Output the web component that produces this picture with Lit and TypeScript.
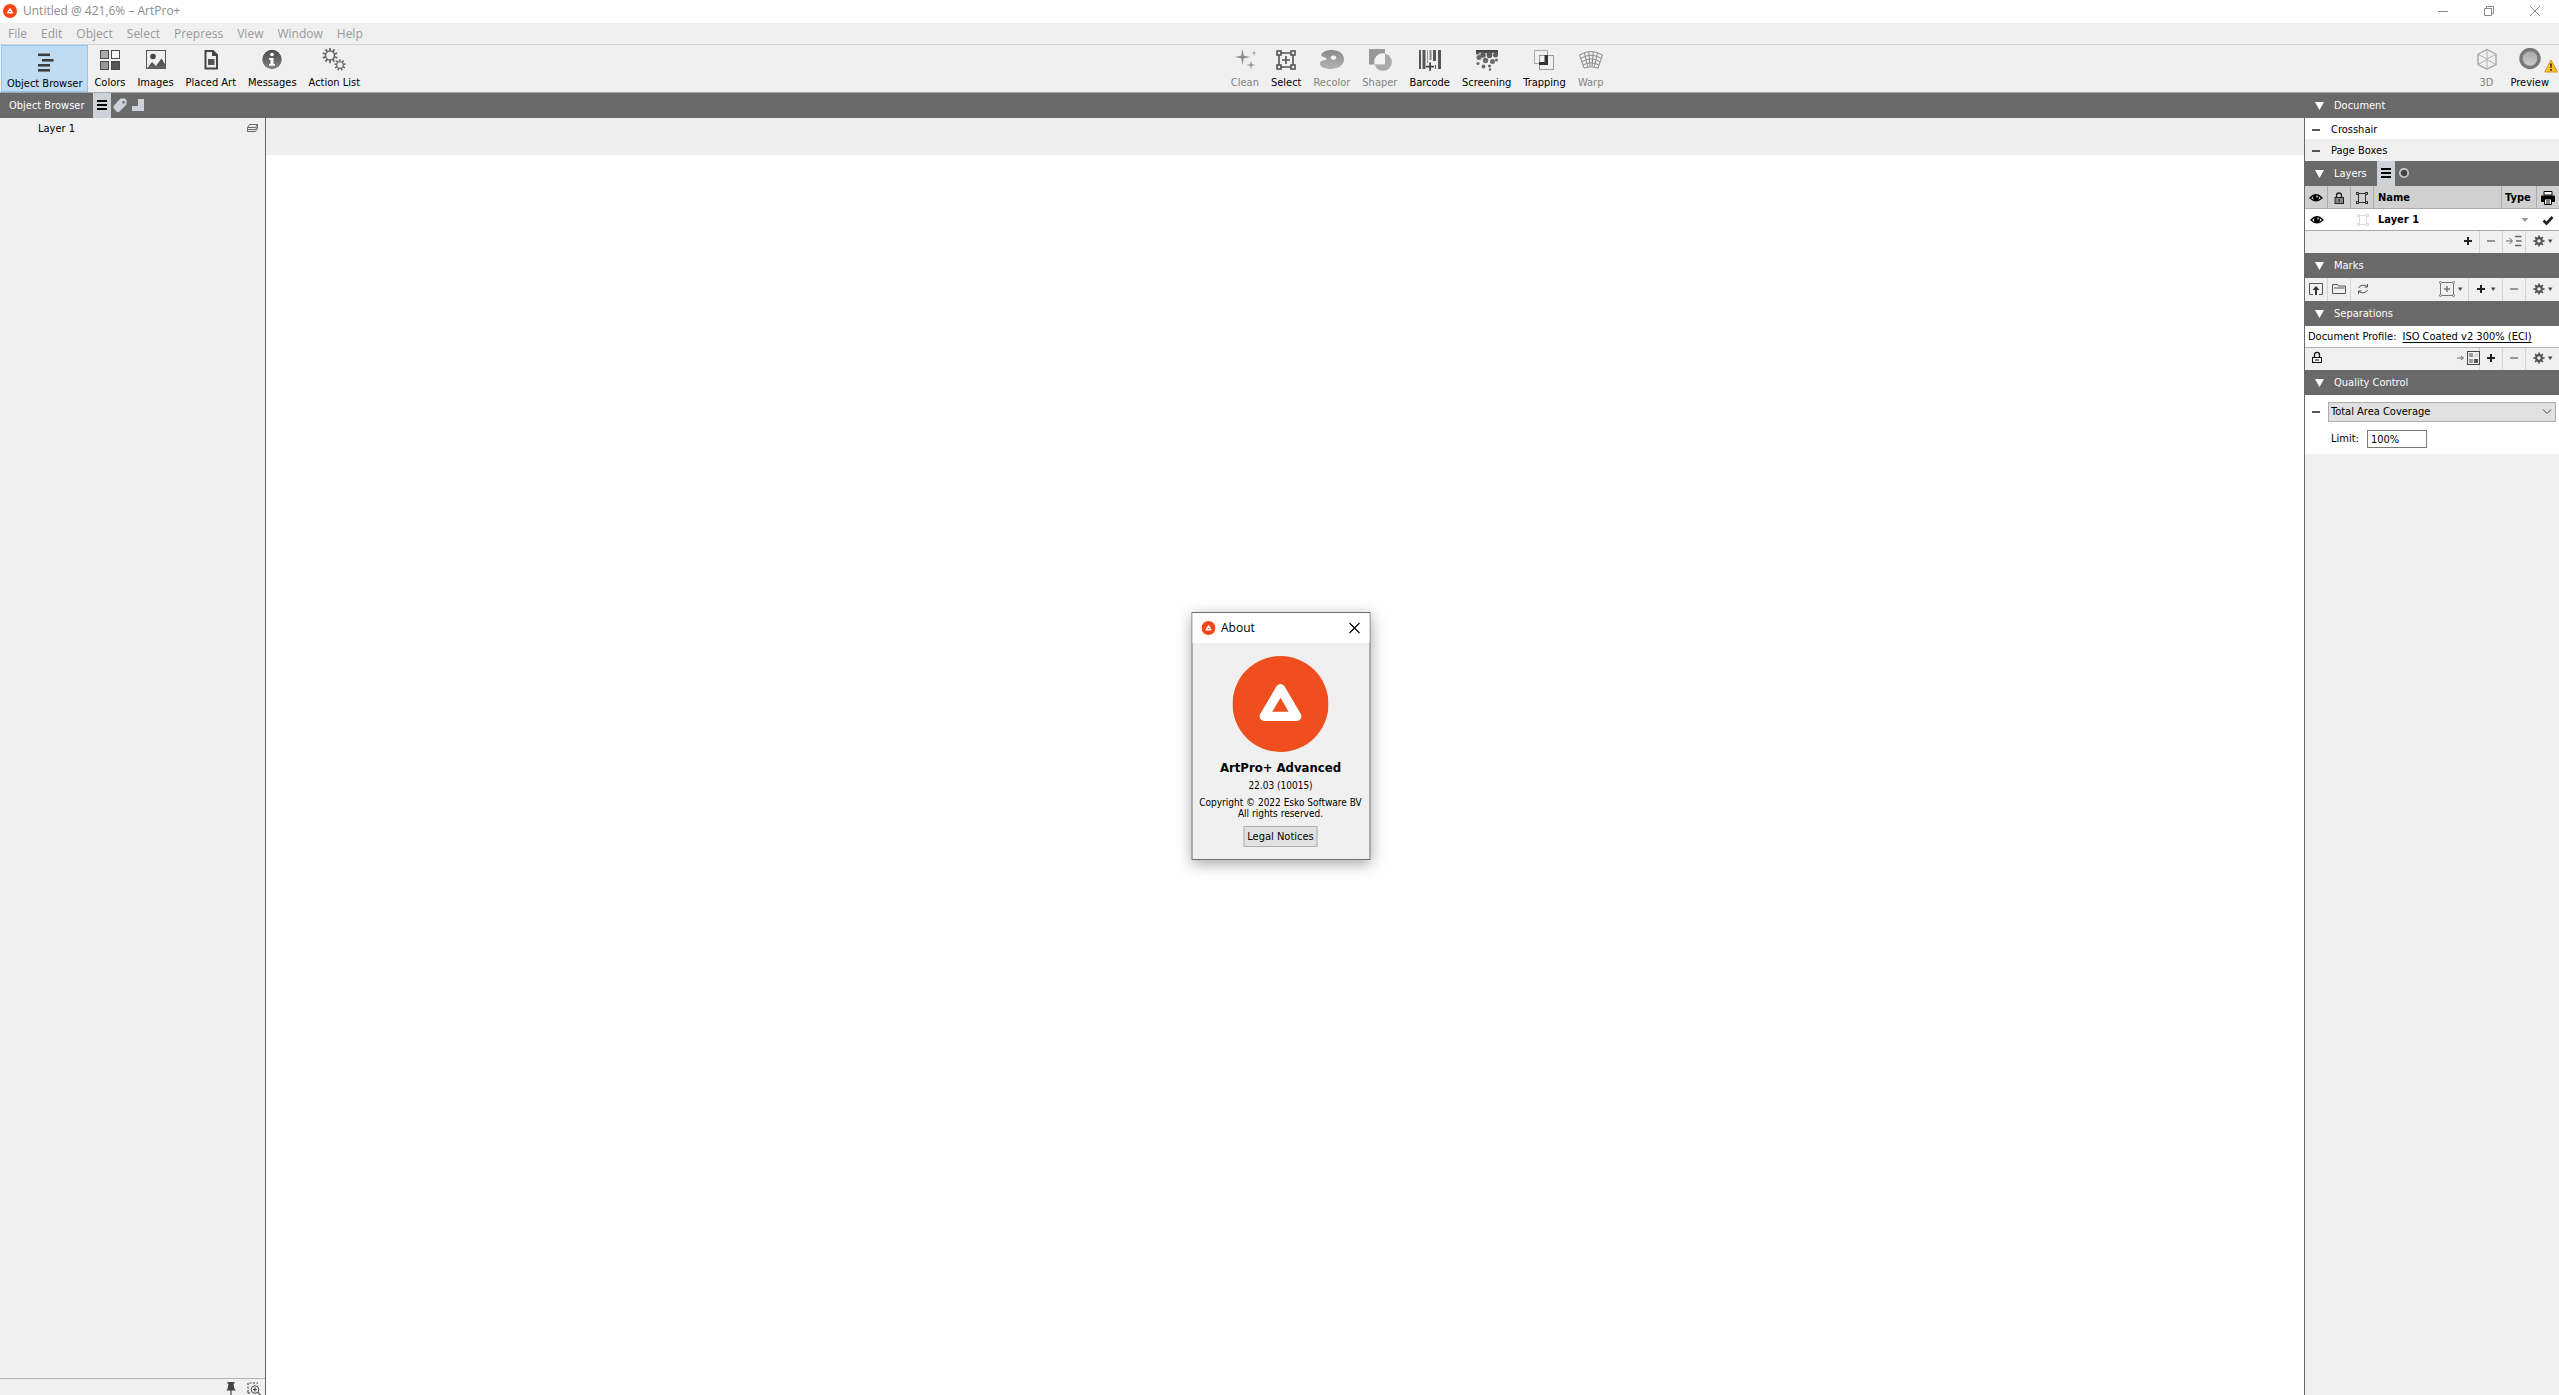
import { LitElement, html, svg, css, nothing, type TemplateResult, type SVGTemplateResult } from "lit";
import { customElement, property } from "lit/decorators.js";
import { classMap } from "lit/directives/class-map.js";

type Icon = SVGTemplateResult;

const icon = (w: number, h: number, body: Icon): TemplateResult =>
  html`<svg width=${w} height=${h} viewBox="0 0 ${w} ${h}" aria-hidden="true">${body}</svg>`;

/** Outline of a cog wheel with square teeth and a round hub hole. */
function cog(cx: number, cy: number, outer: number, inner: number, hole: number, teeth: number): string {
  const pts: string[] = [];
  const step = (Math.PI * 2) / teeth;
  for (let i = 0; i < teeth; i++) {
    const a = i * step;
    const at = (r: number, t: number) =>
      pts.push(`${(cx + r * Math.sin(t)).toFixed(2)} ${(cy - r * Math.cos(t)).toFixed(2)}`);
    at(inner, a - step * 0.28);
    at(outer, a - step * 0.2);
    at(outer, a + step * 0.2);
    at(inner, a + step * 0.28);
  }
  return `M${pts.join("L")}ZM${cx - hole} ${cy}a${hole} ${hole} 0 1 0 ${hole * 2} 0a${hole} ${hole} 0 1 0 ${-hole * 2} 0Z`;
}

const shade = (id: string, top: string, bottom: string): Icon =>
  svg`<defs><linearGradient id=${id} x1="0" y1="0" x2="0" y2="1"><stop offset="0" stop-color=${top}/><stop offset="1" stop-color=${bottom}/></linearGradient></defs>`;

const logo = (size: number, fill: string) => html`<svg width=${size} height=${size} viewBox="0 0 96 96" aria-hidden="true">
  <circle cx="48" cy="48" r="48" fill=${fill}/>
  <path d="M48 32.700 31.700 60.300H64.300Z" fill="none" stroke="#fff" stroke-width="9.300" stroke-linejoin="round"/>
</svg>`;

const big = {
  browser: icon(24, 24, svg`<g fill="#3c3f42">
    <rect x="5" y="4.500" width="12" height="2.600"/><rect x="9" y="10" width="11.500" height="2.600"/>
    <rect x="5" y="15" width="12" height="2.600"/><rect x="5" y="20" width="12" height="2.600"/></g>`),
  colors: icon(24, 24, svg`<g stroke="#4a4a4a">
    <rect x="2.500" y="2.500" width="8" height="8" fill="#aaa"/><rect x="13.500" y="2.500" width="8" height="8" fill="#f4f4f4"/>
    <rect x="2.500" y="13.500" width="8" height="8" fill="#999"/><rect x="13.500" y="13.500" width="8" height="8" fill="#555"/></g>`),
  images: icon(24, 24, svg`${shade("g", "#444", "#666")}
    <rect x="2.500" y="2.500" width="19" height="18" fill="none" stroke="#555"/>
    <circle cx="9" cy="8.500" r="2.800" fill="#444"/>
    <path d="M3 20.500 8 14l4 4 5.500-7.500L21.500 17v3.500Z" fill="url(#g)"/>`),
  placed: icon(24, 24, svg`
    <path d="M6.500 3h7.500l4 4v13.500H6.500Z" fill="none" stroke="#444" stroke-width="2"/>
    <path d="M13 3v5h5Z" fill="#444"/><rect x="9" y="11" width="6.500" height="6" fill="#555"/>`),
  messages: icon(24, 24, svg`${shade("g", "#4c4c4c", "#808080")}
    <circle cx="12" cy="11.500" r="9.700" fill="url(#g)"/>
    <circle cx="12" cy="6.500" r="1.800" fill="#fff"/>
    <path d="M9 10h4.500v6H15v1.800H9V16h1.500v-4.300H9Z" fill="#fff"/>`),
  actions: icon(24, 24, svg`<g fill="#6a6a6a" fill-rule="evenodd">
    <path d=${cog(8, 7.5, 7.7, 5.2, 3.7, 10)}/>
    <path d=${cog(18, 17, 5.8, 3.9, 2.7, 9)}/></g>`),
  clean: icon(24, 24, svg`<g fill="#8c8c8c">
    <path d="M9.500 1 10.800 7.700 17.500 9 10.800 10.300 9.500 17 8.200 10.300 1.500 9 8.200 7.700Z"/>
    <path d="M18 12.500l.8 3.700 3.700.8-3.700.8-.8 3.700-.8-3.700-3.700-.8 3.700-.8Z"/>
    <path d="M21 2.500l.5 2 2 .5-2 .5-.5 2-.5-2-2-.5 2-.5Z"/></g>`),
  select: icon(24, 24, svg`<g fill="none" stroke="#555" stroke-width="1.600">
    <path d="M5 7v10M19 7v10M7 5h10M7 19h10M12 8v8M8 12h8"/>
    <rect x="3" y="3" width="4" height="4"/><rect x="17" y="3" width="4" height="4"/>
    <rect x="3" y="17" width="4" height="4"/><rect x="17" y="17" width="4" height="4"/></g>`),
  recolor: icon(26, 24, svg`${shade("g", "#8a8a8a", "#b4b4b4")}
    <path fill-rule="evenodd" fill="url(#g)" d="M13 2C20 2 25 6 25 11.500S19.500 21 12 21C5 21 1 18.500 1 15.500c0-2.500 3-2.800 5.500-3.500 1.500-.5 1-2-.5-2.500C3 8.500 1.500 8 2.500 6 4 3.500 8 2 13 2ZM14.500 7.500a2.800 2.200 0 1 0 .01 0Z"/>`),
  shaper: icon(24, 24, svg`
    <circle cx="15" cy="14" r="8.800" fill="#aaa"/><path d="M1 1h16v15.500H1Z" fill="#999"/>
    <path d="M17 5.500v11H6.500A8.800 8.800 0 0 1 17 5.500Z" fill="#f4f4f4"/>`),
  barcode: icon(24, 24, svg`<g fill="#555">
    <rect x="1" y="2" width="2" height="19"/><rect x="4.500" y="2" width="3" height="19"/>
    <rect x="9" y="2" width="1" height="13" fill="#999"/><rect x="11.500" y="2" width="2" height="10" fill="#888"/>
    <rect x="15" y="2" width="3" height="11"/><rect x="20" y="2" width="3" height="19"/>
    <rect x="17" y="17" width="1" height="4"/>
    <path d="M11.200 14.500h1.800v3.200h3.200v1.800H13v3.200h-1.800v-3.200H8v-1.800h3.200Z" fill="#444"/></g>`),
  screening: icon(24, 24, svg`${shade("g", "#3c3c3c", "#666")}<path d="M1 2H23V6.500H1Z" fill="url(#g)"/>
    <g fill="#5c5c5c"><circle cx="8" cy="7" r="2.800"/><circle cx="14.500" cy="7.500" r="2.800"/><circle cx="20.500" cy="7" r="2.500"/></g>
    <g fill="#6c6c6c"><circle cx="4" cy="9.500" r="2.500"/><circle cx="10.500" cy="12.500" r="2.700"/><circle cx="17.500" cy="13.500" r="2.500"/>
    <circle cx="3" cy="15.500" r="1.600"/><circle cx="8.500" cy="18.500" r="1.900"/>
    <circle cx="21.500" cy="12" r="1.600"/><circle cx="14.500" cy="18" r="1.600"/><circle cx="15" cy="21.500" r="1.200"/></g>
    <g fill="#ccc"><circle cx="5" cy="5.500" r="1"/><circle cx="11" cy="6" r="1"/><circle cx="18" cy="5.500" r="1"/></g>`),
  trapping: icon(24, 24, svg`
    <rect x="2.500" y="2.500" width="13" height="13" fill="none" stroke="#aaa"/>
    <rect x="7.500" y="7.500" width="14" height="14" fill="none" stroke="#999"/>
    <path d="M16 7v10H7v-3h5.500V7Z" fill="#333"/>`),
  warp: icon(26, 24, svg`<g fill="none" stroke="#8c8c8c" stroke-width="1">
    <path d="M1.500 7Q13 0 24.500 7L20 20Q13 17.500 6 20Z"/>
    <path d="M2.500 10.500Q13 4 23.500 10.500M3.800 13.800Q13 8 22.200 13.800M5 17Q13 12.500 21 17M6.500 5l3.200 13.700M10.800 3.700l1.200 14.800M15.200 3.700 14 18.500M19.500 5l-3.200 13.700"/></g>`),
  cube: icon(24, 24, svg`<g fill="none" stroke="#b0b0b0">
    <path d="M12 1.500 21 6.300V16.500L12 21 3 16.500V6.300Z" stroke="#a0a0a0" stroke-width="1.300"/>
    <path d="M3 6.300 12 11l9-4.700M12 11v10M12 1.500v10M3 16.500l9-5 9 5"/></g>`),
  preview: icon(24, 24, svg`${shade("g", "#a4a4a4", "#d0d0d0")}
    <circle cx="12" cy="10.500" r="9" fill="url(#g)" stroke="#777" stroke-width="3.400"/>`),
};

const small = {
  lines: icon(18, 18, svg`<path d="M4 5h10M4 9h10M4 13h10" stroke="#000" stroke-width="2"/>`),
  tag: icon(18, 18, svg`<path fill-rule="evenodd" fill="#cdd2da" d="M9.500 2.500h4.500L15.500 4v4.500L8 16H6L2.500 12V10ZM12.500 5a1.300 1.300 0 1 0 .01 0Z"/>`),
  corner: icon(18, 18, svg`<path d="M9 3h6v12H3V10h6Z" fill="#cdd2da"/>`),
  ring: icon(18, 18, svg`<circle cx="9" cy="9" r="4.200" fill="#444" stroke="#ccc" stroke-width="1.700"/>`),
  stack: icon(12, 12, svg`<g fill="none" stroke="#666"><path d="M3.500 1.500h8l-2 3h-8ZM1.500 4.500v2h8l2-3v-2M1.500 6.500v2h8l2-3v-2"/></g>`),
  pin: icon(12, 14, svg`<path d="M2.500 0h7v1.800H8.500L9.500 7 11 8.500H6.600V14H5.400V8.500H1L2.500 7 3.500 1.800h-1Z" fill="#444"/>`),
  zoom: icon(14, 14, svg`<path d="M1 10V1h10" fill="none" stroke="#333" stroke-dasharray="2 1.500"/><path d="M1 10v1h2" fill="none" stroke="#333"/>
    <circle cx="8" cy="7.500" r="3.800" fill="none" stroke="#444"/><path d="M10.800 10.300 14 13.500M6 7.500h4M8 5.500v4" stroke="#444" stroke-width="1.200"/>`),
  eye: icon(14, 12, svg`<path d="M1 6Q7-.5 13 6 7 11.500 1 6Z" fill="none" stroke="#000" stroke-width="1.300"/><circle cx="7" cy="5.700" r="3" fill="#000"/><circle cx="8" cy="4.600" r="1" fill="#bbb"/>`),
  lockDark: icon(12, 14, svg`<path d="M3.500 7V4.500a2.500 2.500 0 0 1 5 0V7" fill="none" stroke="#222" stroke-width="1.300"/><rect x="2" y="6.500" width="8.500" height="6" fill="#888" stroke="#222"/><path d="M6.200 8v3" stroke="#222"/>`),
  lock: icon(12, 14, svg`<path d="M3.500 6.500V3.800a2.500 2.500 0 0 1 5 0v2.700" fill="none" stroke="#111" stroke-width="1.300"/><rect x="1.500" y="6.500" width="9" height="5" fill="none" stroke="#111"/><path d="M4 9h4" stroke="#111"/>`),
  frame: (c: string) => icon(14, 14, svg`<g fill="none" stroke=${c}><path d="M3.500 4v6M10.500 4v6M4 2.500h6M4 11.500h6"/><rect x="1.500" y="1.500" width="2" height="2"/><rect x="10.500" y="1.500" width="2" height="2"/><rect x="1.500" y="10.500" width="2" height="2"/><rect x="10.500" y="10.500" width="2" height="2"/></g>`),
  printer: icon(14, 14, svg`<path d="M3 .5h8V4H3Z" fill="#fff" stroke="#000"/><rect y="4.500" width="14" height="6.500" rx="1" fill="#000"/><path d="M3.500 8h7v5.500h-7Z" fill="#fff" stroke="#000"/><path d="M5 10h4M5 12h4" stroke="#000"/>`),
  check: icon(12, 12, svg`<path d="M1.500 6.500 4.500 9.500 10.500 3" fill="none" stroke="#222" stroke-width="2.600"/>`),
  caret: icon(8, 6, svg`<path d="M.5 1h7L4 5Z" fill="#999"/>`),
  drop: icon(6, 6, svg`<path d="M1 1.500h4.500L3.200 5Z" fill="#444"/>`),
  plus: icon(10, 10, svg`<path d="M1 5h8M5 1v8" stroke="#222" stroke-width="2"/>`),
  minus: icon(10, 10, svg`<path d="M1 5h8" stroke="#777" stroke-width="1.500"/>`),
  dash: icon(8, 4, svg`<path d="M0 2h8" stroke="#222" stroke-width="1.500"/>`),
  move: icon(16, 12, svg`<path d="M0 6h6M3.500 3 6.500 6 3.500 9" fill="none" stroke="#666"/><path d="M9 1.500h6.500M10 6h5.500M9 10.500h6.500" stroke="#666" stroke-width="1.300"/>`),
  gear: icon(12, 12, svg`<path fill-rule="evenodd" fill="#555" d=${cog(6, 6, 5.6, 4, 1.8, 8)}/>`),
  upload: icon(14, 14, svg`<path d="M4 12.500H.500V1.500h13v11H10" fill="none" stroke="#555"/><path d="M7 4 10.500 8H8v5H6V8H3.500Z" fill="#333"/>`),
  folder: icon(14, 12, svg`<path d="M.5 1.500h5l1 1.500h7v7.500H.5ZM2 5h10.500" fill="none" stroke="#555"/>`),
  refresh: icon(12, 12, svg`<g fill="none" stroke="#555"><path d="M1.500 5A5 4 0 0 1 10 3.500M10.500 7A5 4 0 0 1 2 8.500M10.500 1v3h-3M1.500 11V8h3"/></g>`),
  selectAdd: icon(16, 16, svg`<g fill="none" stroke="#777"><rect x="1.500" y="1.500" width="13" height="13"/><path d="M5 8h6M8 5v6" stroke-width="1.500"/></g><g fill="#f0f0f0" stroke="#777"><circle cx="1.500" cy="1.500" r="1"/><circle cx="14.500" cy="1.500" r="1"/><circle cx="1.500" cy="14.500" r="1"/><circle cx="14.500" cy="14.500" r="1"/></g>`),
  swatches: icon(23, 14, svg`<path d="M0 7h6M4 5l2.500 2L4 9" fill="none" stroke="#666"/><rect x="10.500" y=".5" width="12" height="13" fill="#f4f4f4" stroke="#444"/><rect x="12" y="2" width="4" height="4" fill="#999"/><rect x="17" y="2" width="4" height="4" fill="#ddd"/><rect x="12" y="8" width="4" height="4" fill="#999"/><rect x="17" y="8" width="4" height="4" fill="#555"/>`),
  warning: icon(14, 14, svg`<path d="M7 1 13.300 13H.7Z" fill="#fdc02f" stroke="#dd9410" stroke-linejoin="round"/><path d="M6 4.500h2L7.600 9H6.400ZM6.100 10h1.800v1.800H6.100Z" fill="#333"/>`),
};

const windowIcons = {
  minimize: icon(12, 12, svg`<path d="M1 6.500h10" stroke="#888"/>`),
  restore: icon(12, 12, svg`<path d="M1.500 3.500h7v7h-7ZM3.500 3.500v-2h7v7h-2" fill="none" stroke="#888"/>`),
  close: icon(12, 12, svg`<path d="M1 1 11 11M11 1 1 11" stroke="#888"/>`),
};

const resets = css`
  *, *::before, *::after { box-sizing: border-box; }
  button { font: inherit; color: inherit; background: none; border: 0; padding: 0; margin: 0; }
  svg { display: block; flex: none; }
`;

@customElement("tool-button")
class ToolButton extends LitElement {
  @property() label = "";
  @property({ attribute: false }) icon: TemplateResult | typeof nothing = nothing;
  @property({ type: Boolean }) active = false;
  @property({ type: Boolean }) disabled = false;
  @property({ type: Boolean }) warning = false;

  static styles = [resets, css`
    :host { display: flex; }
    .tool { position: relative; display: flex; flex-direction: column; align-items: center; gap: 4px;
      padding: 3px 5px 0; color: #000; line-height: 14px; white-space: nowrap; border: 1px solid transparent; border-top: 0; }
    .tool:disabled { color: #838383; }
    .active { background: #c0dcf3; border: 1px solid #90c8f6; }
    .warn { position: absolute; right: -4px; top: 14px; }
  `];

  render() {
    return html`<button class=${classMap({ tool: true, active: this.active })} ?disabled=${this.disabled}>
      ${this.icon}<span>${this.label}</span>
      ${this.warning ? html`<span class="warn">${small.warning}</span>` : nothing}
    </button>`;
  }
}

@customElement("panel-header")
class PanelHeader extends LitElement {
  @property() label = "";
  static styles = [resets, css`
    :host { display: flex; height: 25px; background: #696969; color: #fff; }
    .toggle { display: flex; align-items: center; gap: 10px; padding: 1px 10px 0; }
  `];
  render() {
    return html`<button class="toggle" aria-expanded="true">
      <svg width="9" height="8" viewBox="0 0 9 8" aria-hidden="true"><path d="M0 0h9L4.500 8Z" fill="#fff"/></svg>
      <span>${this.label}</span></button><slot></slot>`;
  }
}

const MENUS = ["File", "Edit", "Object", "Select", "Prepress", "View", "Window", "Help"];

interface Tool { label: string; icon: TemplateResult; active?: boolean; disabled?: boolean; warning?: boolean }

const VIEWS: Tool[] = [
  { label: "Object Browser", icon: big.browser, active: true },
  { label: "Colors", icon: big.colors },
  { label: "Images", icon: big.images },
  { label: "Placed Art", icon: big.placed },
  { label: "Messages", icon: big.messages },
  { label: "Action List", icon: big.actions },
];
const EDITING: Tool[] = [
  { label: "Clean", icon: big.clean, disabled: true },
  { label: "Select", icon: big.select },
  { label: "Recolor", icon: big.recolor, disabled: true },
  { label: "Shaper", icon: big.shaper, disabled: true },
  { label: "Barcode", icon: big.barcode },
  { label: "Screening", icon: big.screening },
  { label: "Trapping", icon: big.trapping },
  { label: "Warp", icon: big.warp, disabled: true },
];
const OUTPUT: Tool[] = [
  { label: "3D", icon: big.cube, disabled: true },
  { label: "Preview", icon: big.preview, warning: true },
];

@customElement("app-root")
class AppRoot extends LitElement {
  static styles = [resets, css`
    :host { display: flex; flex-direction: column; min-height: 100vh; position: relative; overflow: hidden;
      background: #f0f0f0; color: #000; font: 11px/14px "DejaVu Sans Condensed", "Liberation Sans", sans-serif; }
    .titlebar { display: flex; align-items: center; height: 23px; padding: 0 18px 2px 3px; background: #fff; color: #8c8c8c;
      font: 12px/16px "Open Sans", sans-serif; }
    .doc { flex: 1; margin: 0 0 0 6px; font: inherit; }
    .titlebar .controls { display: flex; gap: 34px; }
    .menubar { display: flex; gap: 14px; height: 22px; padding: 0 8px; align-items: center; color: #999;
      font: 12px/16px "Open Sans", sans-serif; border-bottom: 1px solid #d4d4d4; }
    .toolbar { display: flex; justify-content: space-between; height: 48px; padding: 0 1px; border-bottom: 1px solid #a6a6a6; }
    .group { display: flex; }
    .output { padding-right: 3px; }
    .work { flex: 1; display: grid; grid-template-columns: 266px minmax(0, 1fr) 255px; grid-template-rows: 25px 1fr; }
    .strip { grid-column: 1 / 3; display: flex; background: #696969; color: #fff; }
    .strip h2 { margin: 0; padding: 6px 9px 0; font: inherit; }
    .tab { width: 18px; height: 25px; padding-bottom: 2px; }
    .tab.on { background: #cdd2da; }
    .right { grid-column: 3; grid-row: 1 / 3; padding-left: 1px; background: linear-gradient(#696969, #696969) 0 0 / 1px 100% no-repeat; }
    .left { display: flex; flex-direction: column; border-right: 1px solid #696969; }
    .node { display: flex; justify-content: space-between; align-items: center; padding: 4px 7px 0 38px; }
    .leftfoot { display: flex; gap: 10px; justify-content: flex-end; margin-top: auto; height: 17px; padding: 3px 4px 0 0; border-top: 1px solid #b4b4b4; overflow: hidden; }
    .canvas { background: #fff; border-top: 37px solid #efefef; }
    .row { display: flex; align-items: center; gap: 11px; height: 21px; padding: 2px 7px 0; background: #fff; }
    .row.alt { height: 22px; background: #f0f0f0; }
    .layers { width: 100%; border-collapse: separate; border-spacing: 0; table-layout: fixed; font-weight: bold; background: #fff; }
    .layers th, .layers td { height: 22px; padding: 0 4px; text-align: left; }
    .layers th { height: 23px; padding-top: 2px; background: #d0d0d0; border-right: 1px solid #aaa; border-bottom: 1px solid #aaa; }
    .layers th:last-child { border-right: 0; }
    .layers td { border-bottom: 1px solid #aaa; }
    .layers svg { margin: 0 auto; }
    .c-icon { width: 23px; } .c-type { width: 35px; } .c-print { width: 22px; }
    .layers .type svg { margin: 0 4px 0 auto; }
    .layers .tight { padding: 2px 3px 0; }
    .bar { display: flex; height: 22px; }
    .bar.tall { height: 23px; }
    .act { display: flex; align-items: center; justify-content: center; gap: 4px; width: 23px; padding-bottom: 2px; border-right: 1px solid #d4d4d4; }
    .act.menu { width: 34px; }
    .act.gear { width: 33px; gap: 2px; }
    .act.open { border-right: 0; }
    .act.wide { width: 35px; gap: 2px; }
    .push { flex: 1; }
    .profile { display: flex; gap: 6px; height: 22px; padding: 4px 3px 0; background: #fff; border-bottom: 1px solid #b4b4b4; white-space: nowrap; }
    .profile a { color: #000; text-decoration: underline; text-underline-offset: 2px; }
    .quality { padding: 7px 3px 6px 7px; background: #fff; }
    .field { display: flex; align-items: center; gap: 8px; }
    .combo { position: relative; flex: 1; display: flex; }
    .combo select { appearance: none; width: 100%; height: 20px; padding: 0 2px; border: 1px solid #adadad; border-radius: 0; background: #e1e1e1; font: inherit; color: #000; }
    .combo svg { position: absolute; right: 4px; top: 6px; pointer-events: none; }
    .limit { padding: 8px 0 0 19px; }
    .limit input { width: 60px; height: 18px; padding: 0 3px; border: 1px solid #7a7a7a; font: inherit; color: #000; background: #fff; }
    .about { position: absolute; left: calc(50% + 1px); top: 612px; width: 179px; transform: translateX(-50%); border: 1px solid #6e6e6e;
      background: #f0f0f0; box-shadow: 0 4px 14px rgba(0, 0, 0, 0.35); text-align: center; }
    .abouttitle { display: flex; align-items: center; gap: 6px; height: 30px; padding: 0 9px; background: #fff; font: 12px/16px "Open Sans", sans-serif; }
    .abouttitle h2 { flex: 1; margin: 0; font: inherit; text-align: left; }
    .aboutbody { display: flex; flex-direction: column; align-items: center; padding: 13px 0 12px; }
    .product { margin: 8px 0 4px; font-size: 13px; line-height: 16px; font-weight: bold; }
    .fine { margin: 0 0 5px; font-size: 10px; line-height: 12px; }
    .copy { margin: 0 0 7px; font-size: 10px; line-height: 11px; white-space: nowrap; }
    .legal { height: 21px; padding: 0 3px; border: 1px solid #adadad; background: #e1e1e1; }
  `];

  private tools(list: Tool[]) {
    return list.map((t) => html`<tool-button .label=${t.label} .icon=${t.icon} ?active=${!!t.active}
      ?disabled=${!!t.disabled} ?warning=${!!t.warning}></tool-button>`);
  }

  private act(label: string, content: TemplateResult, kind = "") {
    return html`<button class="act ${kind}" aria-label=${label}>${content}</button>`;
  }

  private gear() {
    return this.act("Options", html`${small.gear}${small.drop}`, "gear open");
  }

  private renderRight() {
    return html`<aside class="right">
      <panel-header label="Document"></panel-header>
      <div class="row">${small.dash}<span>Crosshair</span></div>
      <div class="row alt">${small.dash}<span>Page Boxes</span></div>
      <panel-header label="Layers">
        <button class="tab on" aria-label="List">${small.lines}</button>
        <button class="tab" aria-label="Inks">${small.ring}</button>
      </panel-header>
      <table class="layers">
        <colgroup><col class="c-icon"><col class="c-icon"><col class="c-icon"><col><col class="c-type"><col class="c-print"></colgroup>
        <thead><tr>
          <th aria-label="Visible">${small.eye}</th><th aria-label="Locked">${small.lockDark}</th><th aria-label="Selected">${small.frame("#333")}</th>
          <th>Name</th><th class="tight">Type</th><th aria-label="Print" class="tight">${small.printer}</th>
        </tr></thead>
        <tbody><tr>
          <td>${small.eye}</td><td></td><td>${small.frame("#ddd")}</td><td>Layer 1</td><td class="type">${small.caret}</td><td>${small.check}</td>
        </tr></tbody>
      </table>
      <div class="bar"><span class="push"></span>
        ${this.act("Add layer", small.plus)}${this.act("Remove layer", small.minus)}${this.act("Move to layer", small.move)}${this.gear()}
      </div>
      <panel-header label="Marks"></panel-header>
      <div class="bar tall">
        ${this.act("Load marks", small.upload)}${this.act("Open marks", small.folder)}${this.act("Refresh marks", small.refresh, "open")}
        <span class="push"></span>
        ${this.act("Select marks", html`${small.selectAdd}${small.drop}`, "wide")}
        ${this.act("Add mark", html`${small.plus}${small.drop}`, "menu")}${this.act("Remove mark", small.minus)}${this.gear()}
      </div>
      <panel-header label="Separations"></panel-header>
      <div class="profile"><span>Document Profile:</span><a href="#profile">ISO Coated v2 300% (ECI)</a></div>
      <div class="bar">
        ${this.act("Lock separations", small.lock, "open")}<span class="push"></span>
        ${this.act("Move to swatches", small.swatches)}${this.act("Add separation", small.plus)}${this.act("Remove separation", small.minus)}${this.gear()}
      </div>
      <panel-header label="Quality Control"></panel-header>
      <div class="quality">
        <div class="field">${small.dash}
          <div class="combo"><select aria-label="Check"><option>Total Area Coverage</option></select>
            ${icon(10, 8, svg`<path d="M1 1.500 5 5.500 9 1.500" fill="none" stroke="#444"/>`)}</div>
        </div>
        <div class="field limit"><label for="limit">Limit:</label><input id="limit" type="text" value="100%"></div>
      </div>
    </aside>`;
  }

  render() {
    return html`
      <header class="titlebar">
        ${logo(14, "#fa4616")}<h1 class="doc">Untitled @ 421,6% – ArtPro+</h1>
        <div class="controls">
          <button aria-label="Minimize">${windowIcons.minimize}</button>
          <button aria-label="Restore">${windowIcons.restore}</button>
          <button aria-label="Close">${windowIcons.close}</button>
        </div>
      </header>
      <nav class="menubar">${MENUS.map((m) => html`<button>${m}</button>`)}</nav>
      <div class="toolbar">
        <div class="group">${this.tools(VIEWS)}</div>
        <div class="group">${this.tools(EDITING)}</div>
        <div class="group output">${this.tools(OUTPUT)}</div>
      </div>
      <div class="work">
        <div class="strip"><h2>Object Browser</h2>
          <button class="tab on" aria-label="Layers">${small.lines}</button>
          <button class="tab" aria-label="Tags">${small.tag}</button>
          <button class="tab" aria-label="Separations">${small.corner}</button>
        </div>
        <aside class="left">
          <div class="node"><span>Layer 1</span>${small.stack}</div>
          <div class="leftfoot"><button aria-label="Pin">${small.pin}</button><button aria-label="Zoom to selection">${small.zoom}</button></div>
        </aside>
        <main class="canvas"></main>
        ${this.renderRight()}
      </div>
      <section class="about" role="dialog" aria-label="About">
        <div class="abouttitle">${logo(14, "#fa4616")}<h2>About</h2>
          <button aria-label="Close">${icon(12, 12, svg`<path d="M1 1 11 11M11 1 1 11" stroke="#000" stroke-width="1.100"/>`)}</button></div>
        <div class="aboutbody">
          ${logo(96, "#f04e1e")}
          <p class="product">ArtPro+ Advanced</p>
          <p class="fine">22.03 (10015)</p>
          <p class="copy">Copyright © 2022 Esko Software BV<br>All rights reserved.</p>
          <button class="legal">Legal Notices</button>
        </div>
      </section>`;
  }
}
